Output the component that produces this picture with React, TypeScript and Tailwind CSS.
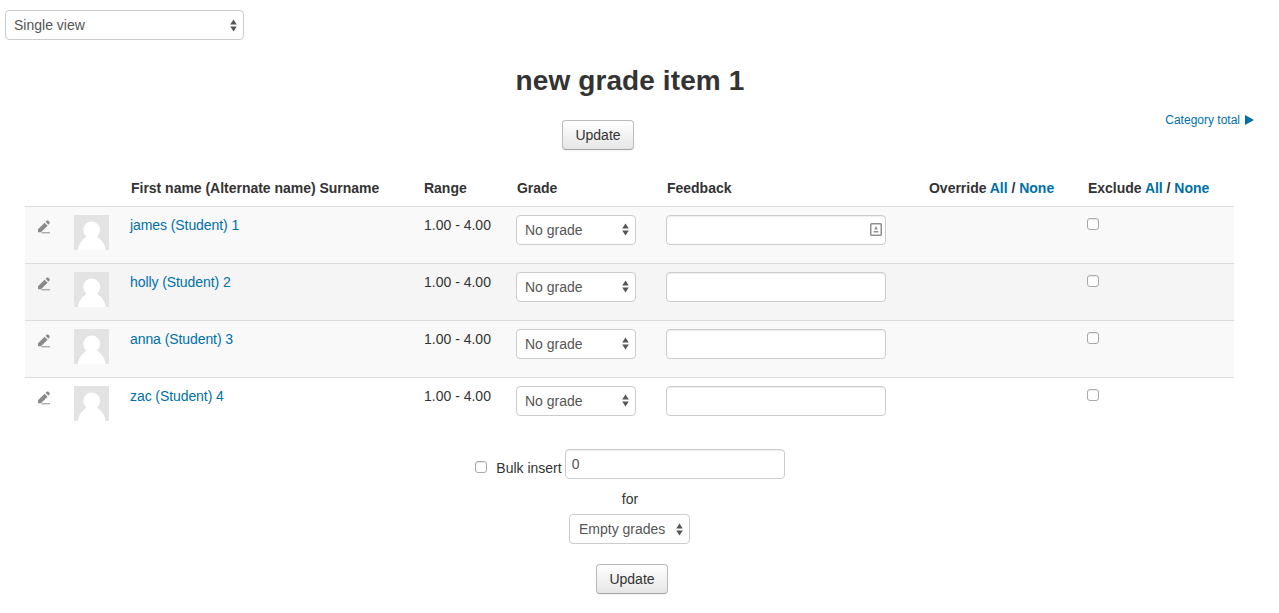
import React from "react";

const font = "font-['Liberation_Sans',Arial,sans-serif]";

function Arrows() {
  return (
    <svg width="7" height="13" viewBox="0 0 7 13" className="shrink-0">
      <path d="M3.5 0.5 L6.8 5.4 H0.2 Z M3.5 12.5 L0.2 7.6 H6.8 Z" fill="#555555" />
    </svg>
  );
}

function FakeSelect({ label, className, labelClass = "" }: { label: string; className: string; labelClass?: string }) {
  return (
    <div className={`flex h-[30px] items-center justify-between rounded-[4px] border border-[#cccccc] bg-white pl-[8px] pr-[6px] text-[14px] text-[#555555] ${className}`}>
      <span className={labelClass}>{label}</span>
      <Arrows />
    </div>
  );
}

function Btn({ className = "" }: { className?: string }) {
  return (
    <button className={`h-[30px] w-[72px] rounded-[4px] border border-[#bbbbbb] border-b-[#a2a2a2] bg-gradient-to-b from-white to-[#e6e6e6] text-[14px] text-[#333333] shadow-[0_1px_2px_rgba(0,0,0,0.05)] ${className}`}>
      Update
    </button>
  );
}

function Check() {
  return <span className="block h-[12px] w-[12px] rounded-[3px] border border-[#a9a9a9] bg-white shadow-[inset_0_1px_1px_rgba(0,0,0,0.08)]" />;
}

function Pencil() {
  return (
    <svg width="14" height="14" viewBox="0 0 14 14">
      <path d="M1 9.3 L7.6 2.7 L10.6 5.7 L4 12.2 L1 12.2 Z M8.6 1.8 L9.9 0.6 Q10.6 0.2 11.2 0.6 L12.6 2 Q13 2.7 12.6 3.3 L11.4 4.7 Z" fill="#8a8a8a" />
      <rect x="4.5" y="12.3" width="8.5" height="1" fill="#8a8a8a" />
    </svg>
  );
}

function Avatar() {
  return (
    <svg width="35" height="35" viewBox="0 0 35 35" className="block">
      <rect width="35" height="35" fill="#e3e3e3" />
      <circle cx="17.7" cy="15" r="8.4" fill="#ffffff" />
      <path d="M4 35 C4.5 28 9 24.5 13 21 L22.5 21 C26.5 24.5 31 28 31.5 35 Z" fill="#ffffff" />
    </svg>
  );
}

const rows = [
  { name: "james (Student) 1", bg: "bg-[#f9f9f9]", icon: true },
  { name: "holly (Student) 2", bg: "bg-[#f5f5f5]", icon: false },
  { name: "anna (Student) 3", bg: "bg-[#f9f9f9]", icon: false },
  { name: "zac (Student) 4", bg: "bg-white", icon: false },
];

const link = "text-[#0070a8]";
const th = "px-[9px] pt-[2px] font-bold tracking-[-0.02px]";

export default function App() {
  return (
    <div className={`${font} h-[613px] w-[1260px] overflow-hidden bg-white text-[14px] leading-[20px] text-[#333333]`}>
      <div className="pl-[5px] pt-[10px]">
        <FakeSelect label="Single view" className="w-[239px]" />
      </div>
      <h2 className="mt-[25px] text-center text-[28px] font-bold leading-[32px] tracking-[0.1px]">new grade item 1</h2>
      <div className="relative mt-[23px] flex justify-center">
        <Btn className="mr-[64px]" />
        <a className={`absolute right-[6px] top-[-10px] flex items-center gap-[5px] text-[12px] ${link}`}>
          Category total
          <svg width="9" height="10" viewBox="0 0 9 10"><path d="M0 0 L9 5 L0 10 Z" fill="#0070a8" /></svg>
        </a>
      </div>

      <table className="ml-[25px] mt-[19px] w-[1209px] table-fixed border-collapse">
        <colgroup>
          <col className="w-[41px]" />
          <col className="w-[56px]" />
          <col className="w-[293px]" />
          <col className="w-[93px]" />
          <col className="w-[150px]" />
          <col className="w-[262px]" />
          <col className="w-[159px]" />
          <col className="w-[155px]" />
        </colgroup>
        <thead>
          <tr className="h-[37px] text-left font-bold">
            <th />
            <th />
            <th className={th}>First name (Alternate name) Surname</th>
            <th className={th}>Range</th>
            <th className={th}>Grade</th>
            <th className={th}>Feedback</th>
            <th className={th}>Override <a className={link}>All</a> / <a className={link}>None</a></th>
            <th className={th}>Exclude <a className={link}>All</a> / <a className={link}>None</a></th>
          </tr>
        </thead>
        <tbody>
          {rows.map((r) => (
            <tr key={r.name} className={`h-[57px] border-t border-[#dddddd] ${r.bg}`}>
              <td className="pl-[12px] pt-[13px] align-top"><Pencil /></td>
              <td className="px-[8px] pt-[8px] align-top"><Avatar /></td>
              <td className={`px-[8px] pt-[8px] align-top tracking-[-0.08px] ${link}`}>{r.name}</td>
              <td className="pl-[9px] pr-[7px] pt-[8px] align-top">1.00 - 4.00</td>
              <td className="px-[8px] pt-[8px] align-top"><FakeSelect label="No grade" className="w-[120px]" /></td>
              <td className="px-[8px] pt-[8px] align-top">
                <div className="relative h-[30px] w-[220px] rounded-[4px] border border-[#cccccc] bg-white shadow-[inset_0_1px_1px_rgba(0,0,0,0.075)]">
                  {r.icon && (
                    <svg width="12" height="13" viewBox="0 0 12 13" className="absolute right-[3px] top-[7px]">
                      <rect x="0.75" y="0.75" width="10.5" height="11.5" rx="0.8" fill="none" stroke="#8f8f8f" strokeWidth="1.5" />
                      <path d="M6 3 L7.8 6.6 H4.2 Z M3.6 8 H8.4 V9.6 H3.6 Z" fill="#8f8f8f" />
                    </svg>
                  )}
                </div>
              </td>
              <td />
              <td className="px-[8px] pt-[11px] align-top"><Check /></td>
            </tr>
          ))}
        </tbody>
      </table>

      <div className="mt-[15px] flex flex-col items-center">
        <div className="flex items-start">
          <span className="mt-[12px]"><Check /></span>
          <span className="ml-[9px] mr-[3px] mt-[9px] text-[#333333]">Bulk insert</span>
          <div className="h-[30px] w-[220px] rounded-[4px] border border-[#cccccc] bg-white pl-[6px] text-[14px] leading-[28px] text-[#555555] shadow-[inset_0_1px_1px_rgba(0,0,0,0.075)]">0</div>
        </div>
        <div className="mt-[10px]">for</div>
        <FakeSelect label="Empty grades" labelClass="ml-[1px]" className="mt-[5px] mr-[1px] w-[121px]" />
        <Btn className="mt-[20px] ml-[4px]" />
      </div>
    </div>
  );
}
